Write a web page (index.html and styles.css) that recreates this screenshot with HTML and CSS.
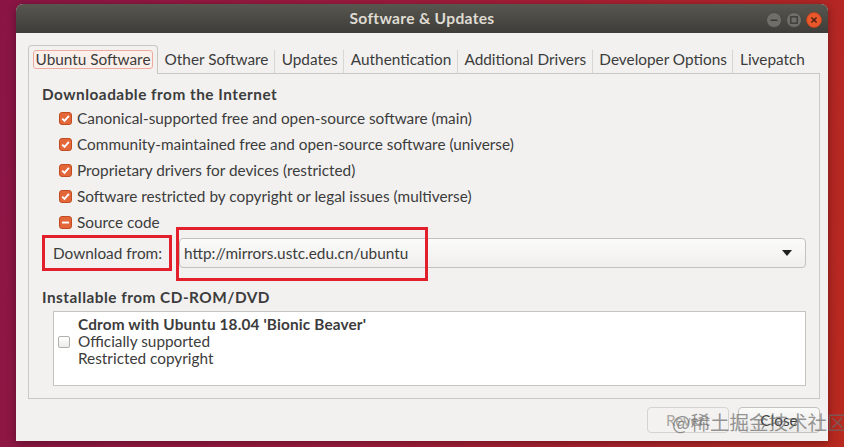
FILE: index.html
```html
<!DOCTYPE html>
<html lang="en">
<head>
    <meta charset="UTF-8">
    <meta name="viewport" content="width=device-width, initial-scale=1.0">
    <title>Software &amp; Updates</title>
    <link rel="stylesheet" href="styles.css">
</head>
<body>
    <div class="window">
        <div class="titlebar">
            <span></span>
            <span class="title">Software &amp; Updates</span>
            <div class="wm-buttons">
                <svg class="wm" width="16" height="16" viewBox="0 0 16 16">
                    <circle cx="8" cy="8" r="7.5" class="wm-gray"/>
                    <path d="M4.5 8.2 H11.5" stroke="#3a3935" stroke-width="1.6"/>
                </svg>
                <svg class="wm" width="16" height="16" viewBox="0 0 16 16">
                    <circle cx="8" cy="8" r="7.5" class="wm-gray"/>
                    <rect x="4.8" y="4.8" width="6.4" height="6.4" fill="none" stroke="#3a3935" stroke-width="1.3"/>
                </svg>
                <svg class="wm" width="16" height="16" viewBox="0 0 16 16">
                    <circle cx="8" cy="8" r="7.5" fill="#e8582a" stroke="#b8401c" stroke-width="0.8"/>
                    <path d="M5.4 5.4 L10.6 10.6 M10.6 5.4 L5.4 10.6" stroke="#4a2012" stroke-width="1.4"/>
                </svg>
            </div>
        </div>

        <div class="content">
            <div class="tabs">
                <div class="tab active"><span class="focus">Ubuntu Software</span></div>
                <div class="tab">Other Software</div>
                <div class="tab">Updates</div>
                <div class="tab">Authentication</div>
                <div class="tab">Additional Drivers</div>
                <div class="tab">Developer Options</div>
                <div class="tab last">Livepatch</div>
            </div>

            <div class="panel">
                <div class="section-title">Downloadable from the Internet</div>
                <ul class="checks">
                    <li><svg class="cb" width="13" height="13" viewBox="0 0 13 13"><rect x="0.5" y="0.5" width="12" height="12" rx="2.5" class="cb-on"/><path d="M3.2 6.6 L5.5 8.9 L9.9 3.9" fill="none" stroke="#fff" stroke-width="1.9"/></svg>Canonical-supported free and open-source software (main)</li>
                    <li><svg class="cb" width="13" height="13" viewBox="0 0 13 13"><rect x="0.5" y="0.5" width="12" height="12" rx="2.5" class="cb-on"/><path d="M3.2 6.6 L5.5 8.9 L9.9 3.9" fill="none" stroke="#fff" stroke-width="1.9"/></svg>Community-maintained free and open-source software (universe)</li>
                    <li><svg class="cb" width="13" height="13" viewBox="0 0 13 13"><rect x="0.5" y="0.5" width="12" height="12" rx="2.5" class="cb-on"/><path d="M3.2 6.6 L5.5 8.9 L9.9 3.9" fill="none" stroke="#fff" stroke-width="1.9"/></svg>Proprietary drivers for devices (restricted)</li>
                    <li><svg class="cb" width="13" height="13" viewBox="0 0 13 13"><rect x="0.5" y="0.5" width="12" height="12" rx="2.5" class="cb-on"/><path d="M3.2 6.6 L5.5 8.9 L9.9 3.9" fill="none" stroke="#fff" stroke-width="1.9"/></svg>Software restricted by copyright or legal issues (multiverse)</li>
                    <li><svg class="cb" width="13" height="13" viewBox="0 0 13 13"><rect x="0.5" y="0.5" width="12" height="12" rx="2.5" class="cb-on"/><rect x="3" y="5.6" width="7" height="1.9" fill="#fff"/></svg>Source code</li>
                </ul>

                <div class="download-row">
                    <span class="mark-label">Download from:</span>
                    <div class="combo">
                        <span class="combo-text">http://mirrors.ustc.edu.cn/ubuntu</span>
                        <span class="arrow"></span>
                        <span class="mark-box"></span>
                    </div>
                </div>

                <div class="section-title cd-title">Installable from CD-ROM/DVD</div>
                <div class="cd-list">
                    <div class="cd-item">
                        <span class="cb-off"></span>
                        <div class="cd-text">
                            <b>Cdrom with Ubuntu 18.04 'Bionic Beaver'</b>
                            <span>Officially supported</span>
                            <span>Restricted copyright</span>
                        </div>
                    </div>
                </div>
            </div>

            <div class="actions">
                <button class="btn" disabled>Revert</button>
                <button class="btn">Close</button>
            </div>
        </div>
    </div>

    <div class="watermark">@稀土掘金技术社区</div>
</body>
</html>
```

FILE: styles.css
```css
* {
    box-sizing: border-box;
}
html, body {
    margin: 0;
}
body {
    width: 844px;
    height: 447px;
    overflow: hidden;
    position: relative;
    padding: 4px 16px 6px;
    background: linear-gradient(100deg, #8a1545 0%, #9e1c3e 45%, #b8291f 100%);
    font-family: Lato, "Noto Sans", sans-serif;
    font-size: 15.35px;
    color: #3c3c3c;
}
.window {
    height: 437px;
    display: flex;
    flex-direction: column;
    background: #f2f1f0;
    border-radius: 7px 7px 0 0;
    box-shadow: 0 2px 10px rgba(0, 0, 0, 0.35);
    overflow: hidden;
}

/* title bar */
.titlebar {
    height: 29px;
    flex: none;
    display: grid;
    grid-template-columns: 1fr auto 1fr;
    align-items: center;
    background: linear-gradient(#57564f, #3e3d39);
}
.title {
    color: #dfdbd2;
    font-weight: bold;
    font-size: 15.6px;
    letter-spacing: 0.3px;
    padding-bottom: 1px;
}
.wm-buttons {
    justify-self: end;
    display: flex;
    gap: 4px;
    padding: 2px 6px 0 0;
}
.wm {
    display: block;
}
.wm-gray {
    fill: #6f6e69;
    stroke: #45443f;
    stroke-width: 0.8;
}

/* tabs */
.content {
    flex: 1;
    display: flex;
    flex-direction: column;
    padding: 12px 8px 8px 12px;
}
.tabs {
    height: 28px;
    flex: none;
    display: flex;
    margin-right: 4px;
}
.tab {
    height: 28px;
    display: flex;
    align-items: center;
    padding: 0 6.6px 1px;
    white-space: nowrap;
    background: linear-gradient(#d8d6d2, #d8d6d2) right 5px / 1px 23px no-repeat;
}
.tab.last {
    background: none;
}
.tab.active {
    position: relative;
    z-index: 1;
    height: 29px;
    padding: 0 4px 2px;
    background: #f2f1f0;
    border: 1px solid #c9c7c2;
    border-bottom: none;
    border-radius: 4px 4px 0 0;
}
.focus {
    line-height: 17px;
    padding: 0 1.5px;
    border: 1px solid #eeab9d;
    border-radius: 3px;
    background: #fbefeb;
}

/* main panel */
.panel {
    flex: 1;
    border: 1px solid #cac8c3;
    padding: 10px 13px 11px 13px;
    display: flex;
    flex-direction: column;
}
.section-title {
    font-weight: bold;
    line-height: 20px;
    margin-bottom: 1px;
    letter-spacing: 0.5px;
}
.checks {
    list-style: none;
    margin: 0;
    padding: 0 0 0 17px;
}
.checks li {
    height: 26px;
    display: flex;
    align-items: center;
    gap: 5px;
}
.cb {
    display: block;
    flex: none;
}
.cb-on {
    fill: #e4673a;
    stroke: #c24c22;
    stroke-width: 1;
}

.download-row {
    height: 36px;
    display: flex;
    align-items: center;
    gap: 7px;
}
.mark-label {
    height: 36px;
    display: flex;
    align-items: center;
    padding: 0 7px 0 8px;
    border: 3px solid #e2202b;
}
.combo {
    flex: 1;
    height: 30px;
    position: relative;
    display: flex;
    align-items: center;
    justify-content: space-between;
    padding: 0 13px 0 4px;
    border: 1px solid #c3c1bc;
    border-radius: 4px;
    background: linear-gradient(#fbfbfa, #f0efed);
}
.arrow {
    width: 0;
    height: 0;
    border-left: 5px solid transparent;
    border-right: 5px solid transparent;
    border-top: 6px solid #1f1f1f;
}
.mark-box {
    position: absolute;
    left: -4px;
    top: -12px;
    width: 252px;
    height: 54px;
    border: 3px solid #e2202b;
}

.cd-title {
    margin-top: 16px;
}
.cd-list {
    height: 75px;
    margin: 3px 0 0 11px;
    padding: 4px 0 0 4px;
    border: 1px solid #c6c4c0;
    background: #fff;
}
.cd-item {
    display: flex;
    align-items: center;
    gap: 8px;
}
.cb-off {
    width: 12px;
    height: 12px;
    border: 1px solid #b3b1ad;
    border-radius: 2px;
    background: linear-gradient(#ffffff, #ecebea);
}
.cd-text {
    display: flex;
    flex-direction: column;
    line-height: 17px;
}
.cd-text b {
    letter-spacing: 0.15px;
}

/* buttons */
.actions {
    display: flex;
    justify-content: flex-end;
    gap: 9px;
    margin-top: 8px;
}
.btn {
    width: 82px;
    height: 26px;
    font: inherit;
    color: #3c3c3c;
    border: 1px solid #c4c2bd;
    border-radius: 4px;
    background: linear-gradient(#fafaf9, #ebeae8);
}
.btn:disabled {
    color: #a9a7a3;
    border-color: #d6d4d0;
    background: #f3f2f1;
}

.watermark {
    position: absolute;
    left: 672px;
    top: 409px;
    font-family: "Noto Sans CJK SC", sans-serif;
    font-size: 19.5px;
    line-height: 26px;
    color: rgba(105, 105, 105, 0.7);
    white-space: nowrap;
}
```
